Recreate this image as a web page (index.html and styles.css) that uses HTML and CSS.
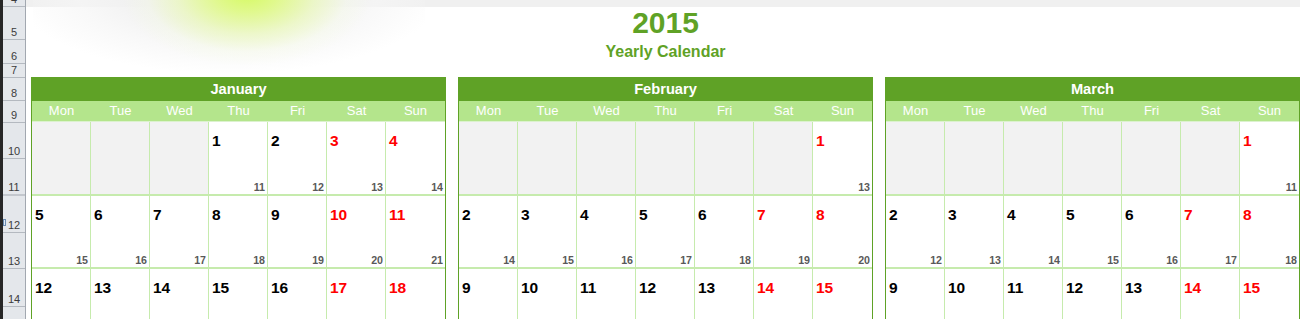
FILE: index.html
```html
<!DOCTYPE html>
<html>
<head>
<meta charset="utf-8">
<title>2015 Yearly Calendar</title>
<link rel="stylesheet" href="styles.css">
</head>
<body>
<div class="app">
  <div class="edge"></div>
  <div class="rowhdr">
    <div class="rh r4"><span>4</span></div>
    <div class="rh r5"><span>5</span></div>
    <div class="rh r6"><span>6</span></div>
    <div class="rh r7"><span>7</span></div>
    <div class="rh r8"><span>8</span></div>
    <div class="rh r9"><span>9</span></div>
    <div class="rh r10"><span>10</span></div>
    <div class="rh r11"><span>11</span></div>
    <div class="rh r12"><i class="mark"></i><span>12</span></div>
    <div class="rh r13"><span>13</span></div>
    <div class="rh r14"><span>14</span></div>
    <div class="rh r15"></div>
  </div>
  <div class="sheet">
    <div class="band"></div>
    <div class="art"></div>
    <header class="title">
      <h1>2015</h1>
      <h2>Yearly Calendar</h2>
    </header>
    <div class="months">
      <section class="month">
        <div class="mname">January</div>
        <div class="dnames"><span>Mon</span><span>Tue</span><span>Wed</span><span>Thu</span><span>Fri</span><span>Sat</span><span>Sun</span></div>
        <div class="grid">
          <div class="cell off"></div><div class="cell off"></div><div class="cell off"></div>
          <div class="cell"><b>1</b><i>11</i></div>
          <div class="cell"><b>2</b><i>12</i></div>
          <div class="cell we"><b>3</b><i>13</i></div>
          <div class="cell we"><b>4</b><i>14</i></div>
          <div class="cell"><b>5</b><i>15</i></div>
          <div class="cell"><b>6</b><i>16</i></div>
          <div class="cell"><b>7</b><i>17</i></div>
          <div class="cell"><b>8</b><i>18</i></div>
          <div class="cell"><b>9</b><i>19</i></div>
          <div class="cell we"><b>10</b><i>20</i></div>
          <div class="cell we"><b>11</b><i>21</i></div>
          <div class="cell"><b>12</b></div>
          <div class="cell"><b>13</b></div>
          <div class="cell"><b>14</b></div>
          <div class="cell"><b>15</b></div>
          <div class="cell"><b>16</b></div>
          <div class="cell we"><b>17</b></div>
          <div class="cell we"><b>18</b></div>
        </div>
      </section>
      <section class="month">
        <div class="mname">February</div>
        <div class="dnames"><span>Mon</span><span>Tue</span><span>Wed</span><span>Thu</span><span>Fri</span><span>Sat</span><span>Sun</span></div>
        <div class="grid">
          <div class="cell off"></div><div class="cell off"></div><div class="cell off"></div>
          <div class="cell off"></div><div class="cell off"></div><div class="cell off"></div>
          <div class="cell we"><b>1</b><i>13</i></div>
          <div class="cell"><b>2</b><i>14</i></div>
          <div class="cell"><b>3</b><i>15</i></div>
          <div class="cell"><b>4</b><i>16</i></div>
          <div class="cell"><b>5</b><i>17</i></div>
          <div class="cell"><b>6</b><i>18</i></div>
          <div class="cell we"><b>7</b><i>19</i></div>
          <div class="cell we"><b>8</b><i>20</i></div>
          <div class="cell"><b>9</b></div>
          <div class="cell"><b>10</b></div>
          <div class="cell"><b>11</b></div>
          <div class="cell"><b>12</b></div>
          <div class="cell"><b>13</b></div>
          <div class="cell we"><b>14</b></div>
          <div class="cell we"><b>15</b></div>
        </div>
      </section>
      <section class="month">
        <div class="mname">March</div>
        <div class="dnames"><span>Mon</span><span>Tue</span><span>Wed</span><span>Thu</span><span>Fri</span><span>Sat</span><span>Sun</span></div>
        <div class="grid">
          <div class="cell off"></div><div class="cell off"></div><div class="cell off"></div>
          <div class="cell off"></div><div class="cell off"></div><div class="cell off"></div>
          <div class="cell we"><b>1</b><i>11</i></div>
          <div class="cell"><b>2</b><i>12</i></div>
          <div class="cell"><b>3</b><i>13</i></div>
          <div class="cell"><b>4</b><i>14</i></div>
          <div class="cell"><b>5</b><i>15</i></div>
          <div class="cell"><b>6</b><i>16</i></div>
          <div class="cell we"><b>7</b><i>17</i></div>
          <div class="cell we"><b>8</b><i>18</i></div>
          <div class="cell"><b>9</b></div>
          <div class="cell"><b>10</b></div>
          <div class="cell"><b>11</b></div>
          <div class="cell"><b>12</b></div>
          <div class="cell"><b>13</b></div>
          <div class="cell we"><b>14</b></div>
          <div class="cell we"><b>15</b></div>
        </div>
      </section>
    </div>
  </div>
</div>
</body>
</html>
```
FILE: styles.css
```css
* { box-sizing: border-box; }
html, body {
  margin: 0;
  padding: 0;
  background: #ffffff;
  overflow: hidden;
}
body {
  font-family: "Liberation Sans", Arial, sans-serif;
}
.app {
  display: flex;
  height: 319px;
  overflow: hidden;
}
.edge {
  width: 3px;
  flex: none;
  background: #262626;
}
.rowhdr {
  width: 23px;
  flex: none;
  background: #e4e7eb;
  border-right: 1px solid #a2a8b0;
  display: flex;
  flex-direction: column;
}
.rh {
  position: relative;
  flex: none;
  display: flex;
  align-items: flex-end;
  justify-content: center;
  border-bottom: 1px solid #b4b9c0;
  overflow: hidden;
  padding-bottom: 1px;
  font-size: 11px;
  line-height: 11px;
  color: #3c3c3c;
}
.rh span { display: block; }
.r4 { height: 7px; }
.r5 { height: 33px; }
.r6 { height: 24px; }
.r7 { height: 14px; }
.r8 { height: 23px; }
.r9 { height: 22px; }
.r10 { height: 36px; }
.r11 { height: 37px; border-bottom-width: 2px; border-bottom-color: #c3c7cd; }
.r12 { height: 37px; }
.r13 { height: 36px; }
.r14 { height: 38px; }
.r15 { flex: 1; border-bottom: 0; }
.mark {
  position: absolute;
  left: 0;
  top: 23px;
  width: 3px;
  height: 7px;
  border: 1px solid #6b8bb0;
  background: #dfe9f5;
}
.sheet {
  position: relative;
  flex: 1;
  min-width: 0;
  overflow: hidden;
}
.band {
  height: 7px;
  background: #f0f0f0;
}
.art {
  position: absolute;
  left: 7px;
  top: 0;
  width: 392px;
  height: 78px;
  background:
    radial-gradient(ellipse 125px 72px at 214px -6px, rgba(214,250,100,1) 0%, rgba(222,250,128,0.88) 25%, rgba(232,250,172,0.58) 55%, rgba(244,252,222,0.28) 80%, rgba(255,255,255,0) 100%),
    radial-gradient(ellipse 215px 82px at 195px -8px, #eeeeee 0%, rgba(240,240,240,0.96) 40%, rgba(246,246,246,0.72) 70%, rgba(255,255,255,0) 100%);
}
.title {
  position: relative;
  height: 70px;
  padding: 1px 0 0 5px;
  text-align: center;
  color: #5fa226;
}
.title h1 {
  margin: 0;
  font-size: 30px;
  line-height: 30px;
  font-weight: 700;
}
.title h2 {
  margin: 6px 0 0;
  font-size: 16px;
  line-height: 16px;
  font-weight: 700;
}
.months {
  display: flex;
  gap: 12px;
  padding-left: 5px;
}
.month {
  flex: none;
  width: 415px;
  border-left: 1px solid #5fa226;
  border-right: 1px solid #5fa226;
}
.mname {
  height: 24px;
  line-height: 24px;
  background: #5fa226;
  color: #ffffff;
  font-weight: 700;
  font-size: 14.67px;
  text-align: center;
}
.dnames {
  display: grid;
  grid-template-columns: repeat(7, 1fr);
  height: 20px;
  line-height: 20px;
  background: #b4e58c;
  color: #ffffff;
  font-size: 13px;
  text-align: center;
}
.grid {
  display: grid;
  grid-template-columns: repeat(6, 58px) 1fr;
  grid-template-rows: 72px 71px 71px;
  column-gap: 1px;
  row-gap: 2px;
  background: #c6ebad;
  border-top: 1px solid #dcf2ce;
}
.cell {
  display: flex;
  flex-direction: column;
  justify-content: space-between;
  background: #ffffff;
  padding: 11px 2px 1px 3px;
}
.cell.off { background: #f2f2f2; }
.cell b {
  font-size: 15.5px;
  line-height: 15px;
  font-weight: 700;
  color: #000000;
}
.cell.we b { color: #ff0000; }
.cell i {
  align-self: flex-end;
  font-style: normal;
  font-weight: 700;
  font-size: 10.67px;
  line-height: 11px;
  color: #595959;
}
```
